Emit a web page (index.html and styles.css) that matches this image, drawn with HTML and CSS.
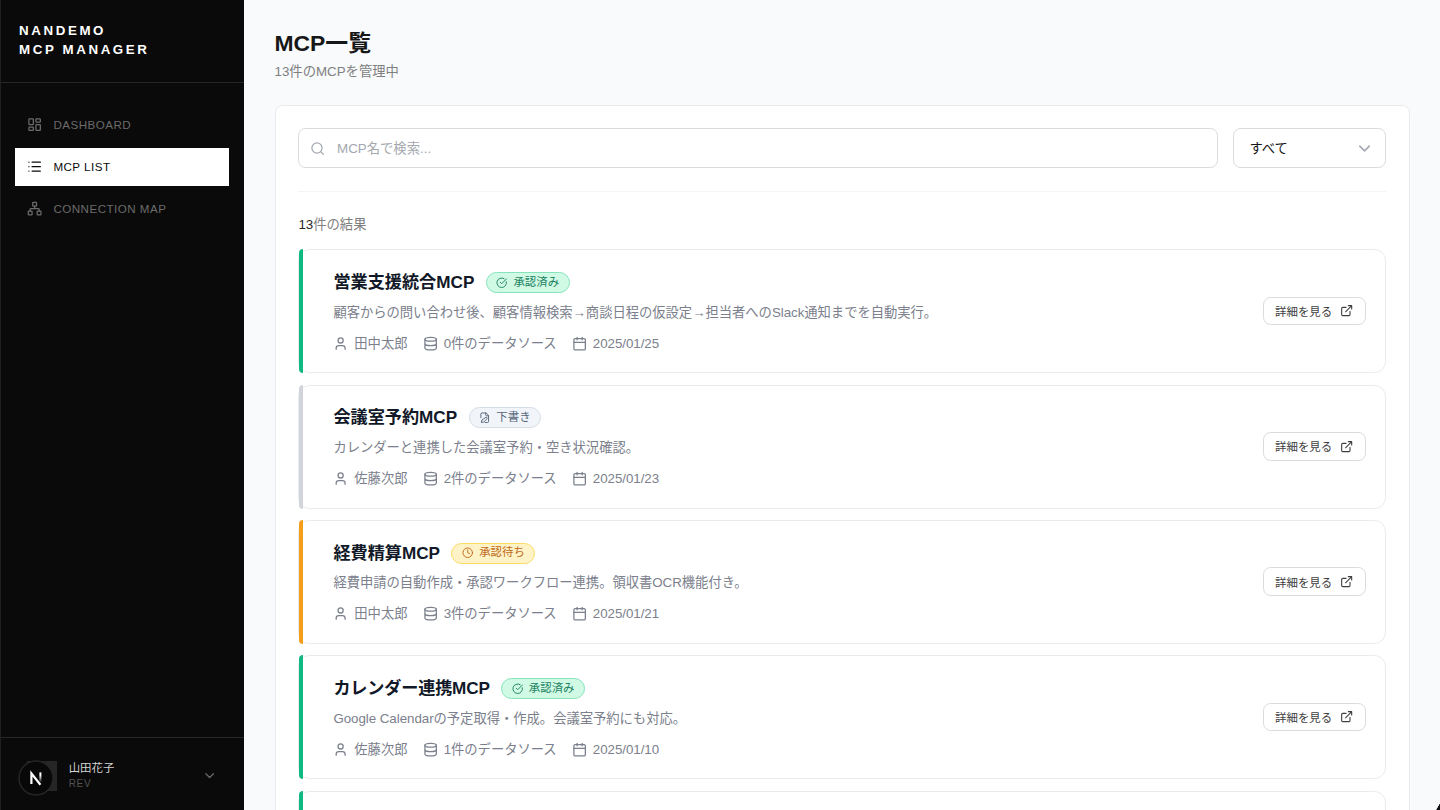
FILE: index.html
```html
<!doctype html>
<html lang="ja">
  <head>
    <meta charset="UTF-8" />
    <meta name="viewport" content="width=device-width, initial-scale=1.0" />
    <title>NANDEMO MCP MANAGER</title>
    <link rel="stylesheet" href="styles.css">
  </head>
  <body>
    <!-- Icon sprite -->
    <svg class="sprite" aria-hidden="true">
      <symbol id="dashboard" viewBox="0 0 24 24">
        <rect x="3" y="3" width="7" height="9" rx="1" />
        <rect x="14" y="3" width="7" height="5" rx="1" />
        <rect x="14" y="12" width="7" height="9" rx="1" />
        <rect x="3" y="16" width="7" height="5" rx="1" />
      </symbol>
      <symbol id="list" viewBox="0 0 24 24">
        <path d="M8 5h13M8 12h13M8 19h13M3 5h.01M3 12h.01M3 19h.01" />
      </symbol>
      <symbol id="network" viewBox="0 0 24 24">
        <rect x="16" y="16" width="6" height="6" rx="1" />
        <rect x="2" y="16" width="6" height="6" rx="1" />
        <rect x="9" y="2" width="6" height="6" rx="1" />
        <path d="M5 16v-3a1 1 0 0 1 1-1h12a1 1 0 0 1 1 1v3M12 12V8" />
      </symbol>
      <symbol id="chevron" viewBox="0 0 24 24">
        <path d="m6 9 6 6 6-6" />
      </symbol>
      <symbol id="search" viewBox="0 0 24 24">
        <circle cx="11" cy="11" r="8" />
        <path d="m21 21-4.3-4.3" />
      </symbol>
      <symbol id="check" viewBox="0 0 24 24">
        <path d="M21.8 10A10 10 0 1 1 17 3.34" />
        <path d="m9 11 3 3L22 4" />
      </symbol>
      <symbol id="draft" viewBox="0 0 24 24">
        <path d="M4 12V4a2 2 0 0 1 2-2h9l5 5v13a2 2 0 0 1-2 2h-5" />
        <path d="M14 2v4a2 2 0 0 0 2 2h4" />
        <path d="M13.4 11.6a2 2 0 0 1 3 3L10 21l-5 1 1-4.5z" />
      </symbol>
      <symbol id="clock" viewBox="0 0 24 24">
        <circle cx="12" cy="12" r="10" />
        <path d="M12 6v6l4 2" />
      </symbol>
      <symbol id="user" viewBox="0 0 24 24">
        <path d="M19 21v-2a4 4 0 0 0-4-4H9a4 4 0 0 0-4 4v2" />
        <circle cx="12" cy="7" r="4" />
      </symbol>
      <symbol id="database" viewBox="0 0 24 24">
        <ellipse cx="12" cy="5" rx="9" ry="3" />
        <path d="M3 5v14a9 3 0 0 0 18 0V5M3 12a9 3 0 0 0 18 0" />
      </symbol>
      <symbol id="calendar" viewBox="0 0 24 24">
        <path d="M8 2v4M16 2v4M3 10h18" />
        <rect x="3" y="4" width="18" height="18" rx="2" />
      </symbol>
      <symbol id="external" viewBox="0 0 24 24">
        <path d="M15 3h6v6M10 14 21 3M18 13v6a2 2 0 0 1-2 2H5a2 2 0 0 1-2-2V8a2 2 0 0 1 2-2h6" />
      </symbol>
    </svg>

    <div class="app">
      <aside class="sidebar">
        <div class="brand">NANDEMO<br />MCP MANAGER</div>

        <nav class="nav">
          <a class="nav-item"><svg class="icon"><use href="#dashboard" /></svg>DASHBOARD</a>
          <a class="nav-item is-active"><svg class="icon"><use href="#list" /></svg>MCP LIST</a>
          <a class="nav-item"><svg class="icon"><use href="#network" /></svg>CONNECTION MAP</a>
        </nav>

        <div class="account">
          <div class="avatar">
            <svg class="dev-badge" viewBox="0 0 36 36">
              <defs>
                <linearGradient id="fade" x1="0" y1="0" x2="0" y2="1">
                  <stop offset="0.3" stop-color="#fff" />
                  <stop offset="1" stop-color="#fff" stop-opacity="0.1" />
                </linearGradient>
              </defs>
              <circle cx="18" cy="18" r="17" />
              <path d="M13.4 24V13.4L22.4 24.8" />
              <rect x="21.4" y="12.4" width="2" height="9.5" fill="url(#fade)" />
            </svg>
          </div>
          <div class="account-text">
            <div class="account-name">山田花子</div>
            <div class="account-role">REV</div>
          </div>
          <svg class="icon account-chevron"><use href="#chevron" /></svg>
        </div>
      </aside>

      <main class="main">
        <h1>MCP一覧</h1>
        <p class="subtitle">13件のMCPを管理中</p>

        <section class="panel">
          <div class="toolbar">
            <div class="search">
              <svg class="icon"><use href="#search" /></svg>
              <span>MCP名で検索...</span>
            </div>
            <div class="select">
              <span>すべて</span>
              <svg class="icon"><use href="#chevron" /></svg>
            </div>
          </div>

          <p class="result-count"><strong>13</strong>件の結果</p>

          <div class="mcp-list">
            <article class="mcp approved">
              <div class="mcp-body">
                <div class="mcp-head">
                  <h2>営業支援統合MCP</h2>
                  <span class="badge"><svg class="icon"><use href="#check" /></svg>承認済み</span>
                </div>
                <p class="mcp-desc">顧客からの問い合わせ後、顧客情報検索→商談日程の仮設定→担当者へのSlack通知までを自動実行。</p>
                <div class="mcp-meta">
                  <span><svg class="icon"><use href="#user" /></svg>田中太郎</span>
                  <span><svg class="icon"><use href="#database" /></svg>0件のデータソース</span>
                  <span><svg class="icon"><use href="#calendar" /></svg>2025/01/25</span>
                </div>
              </div>
              <button class="detail">詳細を見る<svg class="icon"><use href="#external" /></svg></button>
            </article>

            <article class="mcp draft">
              <div class="mcp-body">
                <div class="mcp-head">
                  <h2>会議室予約MCP</h2>
                  <span class="badge"><svg class="icon"><use href="#draft" /></svg>下書き</span>
                </div>
                <p class="mcp-desc">カレンダーと連携した会議室予約・空き状況確認。</p>
                <div class="mcp-meta">
                  <span><svg class="icon"><use href="#user" /></svg>佐藤次郎</span>
                  <span><svg class="icon"><use href="#database" /></svg>2件のデータソース</span>
                  <span><svg class="icon"><use href="#calendar" /></svg>2025/01/23</span>
                </div>
              </div>
              <button class="detail">詳細を見る<svg class="icon"><use href="#external" /></svg></button>
            </article>

            <article class="mcp pending">
              <div class="mcp-body">
                <div class="mcp-head">
                  <h2>経費精算MCP</h2>
                  <span class="badge"><svg class="icon"><use href="#clock" /></svg>承認待ち</span>
                </div>
                <p class="mcp-desc">経費申請の自動作成・承認ワークフロー連携。領収書OCR機能付き。</p>
                <div class="mcp-meta">
                  <span><svg class="icon"><use href="#user" /></svg>田中太郎</span>
                  <span><svg class="icon"><use href="#database" /></svg>3件のデータソース</span>
                  <span><svg class="icon"><use href="#calendar" /></svg>2025/01/21</span>
                </div>
              </div>
              <button class="detail">詳細を見る<svg class="icon"><use href="#external" /></svg></button>
            </article>

            <article class="mcp approved">
              <div class="mcp-body">
                <div class="mcp-head">
                  <h2 class="kana">カレンダー連携MCP</h2>
                  <span class="badge"><svg class="icon"><use href="#check" /></svg>承認済み</span>
                </div>
                <p class="mcp-desc">Google Calendarの予定取得・作成。会議室予約にも対応。</p>
                <div class="mcp-meta">
                  <span><svg class="icon"><use href="#user" /></svg>佐藤次郎</span>
                  <span><svg class="icon"><use href="#database" /></svg>1件のデータソース</span>
                  <span><svg class="icon"><use href="#calendar" /></svg>2025/01/10</span>
                </div>
              </div>
              <button class="detail">詳細を見る<svg class="icon"><use href="#external" /></svg></button>
            </article>

            <article class="mcp approved"></article>
          </div>
        </section>
      </main>
    </div>
  </body>
</html>
```
FILE: styles.css
```css
html {
  font-size: 15.25px;
}

* {
  box-sizing: border-box;
}

body {
  margin: 0;
  font-family: "Liberation Sans", "Noto Sans CJK JP", sans-serif;
  font-size: 0.875rem;
  line-height: 1.25rem;
  color: #171717;
  background: #f8fafc;
  overflow: hidden;
}

h1,
h2,
p {
  margin: 0;
}

.sprite {
  display: none;
}

.icon {
  width: 1rem;
  height: 1rem;
  flex: none;
  fill: none;
  stroke: currentColor;
  stroke-width: 2;
  stroke-linecap: round;
  stroke-linejoin: round;
}

.app {
  display: flex;
  height: 100vh;
  overflow: hidden;
}

/* dark window corner */
.app::after {
  content: "";
  position: fixed;
  right: 0;
  bottom: 0;
  width: 4px;
  height: 7px;
  background: linear-gradient(to bottom right, transparent 48%, #111 56%);
}

/* Sidebar */
.sidebar {
  display: flex;
  flex-direction: column;
  width: 16rem;
  flex: none;
  background: #0a0a0a;
  border-left: 1px solid #1f1f1f;
}

.brand {
  height: 83px;
  padding: 20.5px 18px 0;
  border-bottom: 1px solid #262626;
  color: #fff;
  font-weight: bold;
  letter-spacing: 0.195em;
}

.nav {
  display: flex;
  flex-direction: column;
  gap: 0.25rem;
  flex: 1;
  padding: 1.5rem 1rem 0 14.25px;
}

.nav-item {
  display: flex;
  align-items: center;
  gap: 0.75rem;
  height: 2.5rem;
  padding: 0 0.75rem;
  color: #6b6b6b;
  font-size: 11.6px;
  letter-spacing: 0.48px;
}

.nav-item.is-active {
  background: #fff;
  color: #0a0a0a;
}

.account {
  display: flex;
  align-items: center;
  gap: 0.75rem;
  height: 73px;
  padding: 4px 1.75rem 0 25.7px;
  border-top: 1px solid #262626;
}

.avatar {
  position: relative;
  width: 2rem;
  height: 2rem;
  background: #262626;
}

.dev-badge {
  position: absolute;
  left: -8.7px;
  top: -1px;
  width: 36px;
  height: 36px;
}

.dev-badge circle {
  fill: #080808;
  stroke: #262626;
  stroke-width: 1.5;
}

.dev-badge path {
  fill: none;
  stroke: #fff;
  stroke-width: 2.2;
}

.account-text {
  flex: 1;
}

.account-name {
  color: #d4d4d4;
  font-size: 0.75rem;
  line-height: 1rem;
}

.account-role {
  padding-top: 1px;
  color: #525252;
  font-size: 10px;
  line-height: 0.9375rem;
  letter-spacing: 0.07em;
}

.account-chevron {
  color: #666;
}

/* Main */
.main {
  flex: 1;
  padding: 28px 2rem 0;
}

h1 {
  font-size: 1.5rem;
  line-height: 2rem;
}

.subtitle {
  margin: 3px 0 1.625rem;
  color: #808080;
}

.panel {
  height: 800px;
  padding: 22px 1.5rem 0;
  background: #fff;
  border: 1px solid #e8eaed;
  border-radius: 0.5rem;
}

.toolbar {
  display: flex;
  gap: 1rem;
  padding-bottom: 1.5rem;
  border-bottom: 1px solid #f3f4f6;
}

.search,
.select {
  display: flex;
  align-items: center;
  height: 2.625rem;
  padding: 0 11px;
  border: 1px solid #d9dbdf;
  border-radius: 0.5rem;
}

.search {
  flex: 1;
  gap: 0.75rem;
  color: #a3a8b0;
}

.select {
  justify-content: space-between;
  width: 10rem;
  padding-left: 1rem;
}

.select .icon {
  width: 1.25rem;
  height: 1.25rem;
  color: #a3a8b0;
}

.result-count {
  margin: 1.5rem 0 1rem;
  color: #808080;
}

.result-count strong {
  color: #262626;
  font-weight: normal;
}

/* MCP cards */
.mcp-list {
  display: flex;
  flex-direction: column;
  gap: 0.75rem;
}

.mcp {
  position: relative;
  display: flex;
  align-items: center;
  justify-content: space-between;
  height: 8.125rem;
  padding: 0 1.25rem 1px 34px;
  border: 1px solid #e9ebee;
  border-radius: 0.75rem;
}

/* status stripe over the card's left border */
.mcp::before {
  content: "";
  position: absolute;
  left: -0.4px;
  top: -1px;
  bottom: -1px;
  width: 4.4px;
  border-radius: 4px 0 0 4px;
  background: #10b981;
}

.mcp-head {
  display: flex;
  align-items: center;
  gap: 0.75rem;
  height: 1.75rem;
}

.mcp h2 {
  color: #111827;
  font-size: 1.125rem;
  line-height: 1.75rem;
}

.mcp .kana {
  letter-spacing: -0.18px;
}

.badge {
  display: flex;
  align-items: center;
  gap: 0.375rem;
  height: 1.375rem;
  padding: 0 0.625rem;
  border: 1px solid;
  border-radius: 1rem;
  font-size: 0.75rem;
  line-height: 1rem;
}

.badge .icon {
  width: 0.75rem;
  height: 0.75rem;
}

.mcp-desc {
  margin: 7px 0 12px;
  color: #7b808c;
  letter-spacing: -0.04px;
}

.mcp-meta {
  display: flex;
  gap: 1rem;
  color: #7b808c;
  letter-spacing: -0.05px;
}

.mcp-meta span {
  display: flex;
  align-items: center;
  gap: 0.375rem;
}

.detail {
  display: flex;
  align-items: center;
  gap: 0.5rem;
  height: 1.875rem;
  padding: 0 0.75rem;
  border: 1px solid #d9dbdf;
  border-radius: 0.5rem;
  background: #fff;
  color: #404040;
  font-family: inherit;
  font-size: 0.75rem;
}

.detail .icon {
  width: 0.875rem;
  height: 0.875rem;
}

.approved .badge {
  background: #d1fae5;
  border-color: #86e3bd;
  color: #1c8262;
}

.draft::before {
  background: #d1d5db;
}

.draft .badge {
  background: #f1f5f9;
  border-color: #d5dde7;
  color: #56657a;
}

.pending::before {
  background: #f59e1b;
}

.pending .badge {
  background: #fef3c7;
  border-color: #fbdc60;
  color: #c06a1c;
}
```
